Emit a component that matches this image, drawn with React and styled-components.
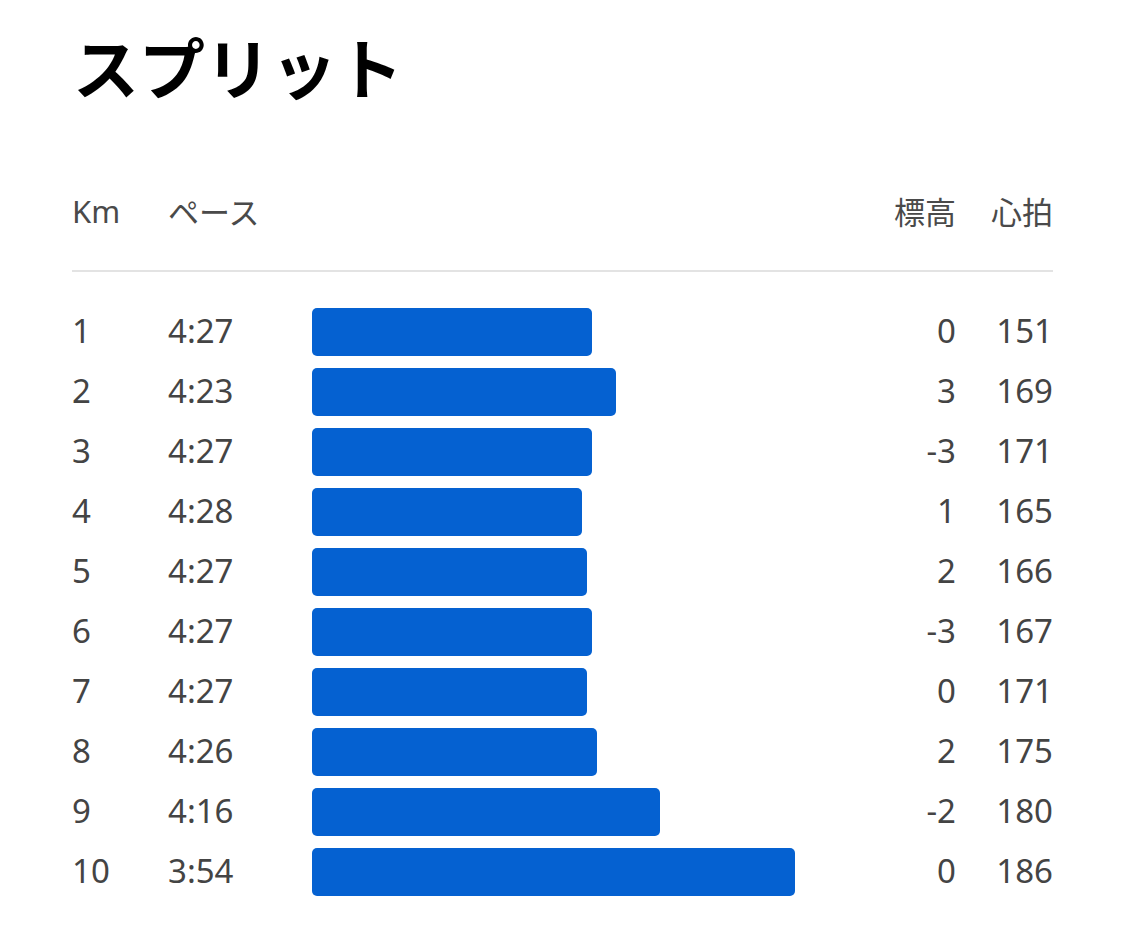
import React from "react";
import styled, { createGlobalStyle } from "styled-components";

const GlobalStyle = createGlobalStyle`
  body {
    margin: 0;
    background: #ffffff;
    font-family: "Noto Sans", "Noto Sans CJK JP", sans-serif;
  }
`;

const Page = styled.div`
  width: 981px;
  padding: 32px 0 0 72px;
`;

const Title = styled.h1`
  margin: 0;
  font-family: "Noto Sans CJK JP", sans-serif;
  font-size: 66px;
  line-height: 66px;
  font-weight: 700;
  color: #000;
  padding-left: 1px;
`;

const Grid = styled.div`
  display: grid;
  grid-template-columns: 96px 144px 1fr 110px 97px;
  align-items: center;
  color: #444;
  font-size: 33px;
`;

const Header = styled(Grid)`
  margin-top: 90px;
  height: 40px;
  padding-bottom: 42px;
  border-bottom: 2px solid #e3e3e3;
  font-size: 31px;
  color: #4a4a4a;
`;

const List = styled.div`
  padding-top: 30px;
`;

const Row = styled(Grid)`
  height: 60px;

  & > span {
    padding-bottom: 3px;
  }
`;

const Cell = styled.span`
  text-align: ${({ right }) => (right ? "right" : "left")};
  white-space: nowrap;
`;

const Bar = styled.div`
  height: 48px;
  background: #0561d1;
  border-radius: 5px;
`;

const splits = [
  { km: 1, pace: "4:27", bar: 280, elev: 0, hr: 151 },
  { km: 2, pace: "4:23", bar: 304, elev: 3, hr: 169 },
  { km: 3, pace: "4:27", bar: 280, elev: -3, hr: 171 },
  { km: 4, pace: "4:28", bar: 270, elev: 1, hr: 165 },
  { km: 5, pace: "4:27", bar: 275, elev: 2, hr: 166 },
  { km: 6, pace: "4:27", bar: 280, elev: -3, hr: 167 },
  { km: 7, pace: "4:27", bar: 275, elev: 0, hr: 171 },
  { km: 8, pace: "4:26", bar: 285, elev: 2, hr: 175 },
  { km: 9, pace: "4:16", bar: 348, elev: -2, hr: 180 },
  { km: 10, pace: "3:54", bar: 483, elev: 0, hr: 186 },
];

export default function App() {
  return (
    <Page>
      <GlobalStyle />
      <Title>スプリット</Title>
      <Header>
        <Cell>Km</Cell>
        <Cell>ペース</Cell>
        <span />
        <Cell right>標高</Cell>
        <Cell right>心拍</Cell>
      </Header>
      <List>
        {splits.map((s) => (
          <Row key={s.km}>
            <Cell>{s.km}</Cell>
            <Cell>{s.pace}</Cell>
            <div>
              <Bar style={{ width: s.bar }} />
            </div>
            <Cell right>{s.elev}</Cell>
            <Cell right>{s.hr}</Cell>
          </Row>
        ))}
      </List>
    </Page>
  );
}
